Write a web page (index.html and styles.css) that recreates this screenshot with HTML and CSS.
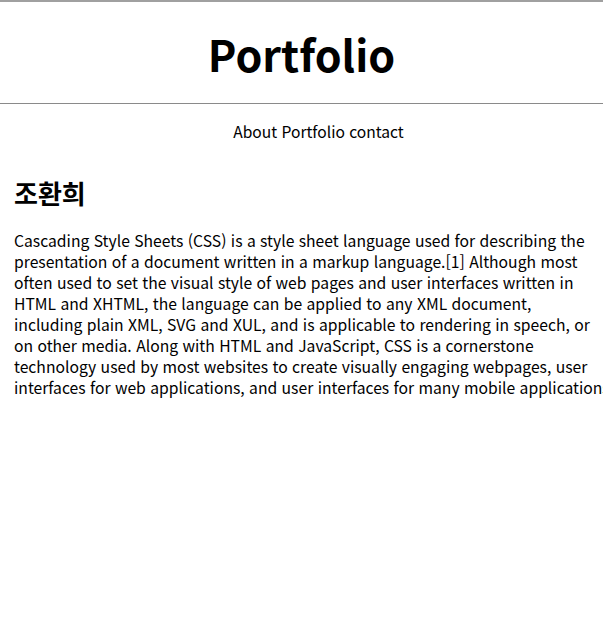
FILE: index.html
```html
<!DOCTYPE html>
<html lang="ko">
<head>
<meta charset="utf-8">
<title>Portfolio</title>
<link rel="stylesheet" href="styles.css">
</head>
<body>
<header class="site-header">
  <h1 class="site-title">Portfolio</h1>
</header>
<nav class="site-nav">About Portfolio contact</nav>
<section class="intro">
  <h2 class="intro-name">조환희</h2>
  <p class="intro-text">Cascading Style Sheets (CSS) is a style sheet language used for describing the<br>presentation of a document written in a markup language.[1] Although most<br>often used to set the visual style of web pages and user interfaces written in<br>HTML and XHTML, the language can be applied to any XML document,<br>including plain XML, SVG and XUL, and is applicable to rendering in speech, or<br>on other media. Along with HTML and JavaScript, CSS is a cornerstone<br>technology used by most websites to create visually engaging webpages, user<br>interfaces for web applications, and user interfaces for many mobile applications.</p>
</section>
</body>
</html>
```
FILE: styles.css
```css
html, body {
  margin: 0;
  padding: 0;
  background: #fff;
  overflow: hidden;
}
body {
  font-family: "Noto Sans CJK KR", "Noto Sans", sans-serif;
  color: #000;
  font-size: 15.7px;
}
.site-header {
  border-top: 2px solid #a0a0a0;
  border-bottom: 1px solid #8a8a8a;
  height: 101px;
  display: flex;
  align-items: center;
  justify-content: center;
}
.site-title {
  margin: 0;
  font-size: 43px;
  font-weight: 700;
  line-height: 1;
  padding-top: 2px;
}
.site-nav {
  text-align: center;
  margin-top: 16px;
  padding-left: 34px;
  line-height: 22px;
  font-size: 15.6px;
}
.intro {
  padding: 0 14px;
}
.intro-name {
  margin: 34px 0 0;
  font-size: 26px;
  font-weight: 700;
  line-height: 34px;
}
.intro-text {
  margin: 20px 0 0;
  line-height: 21px;
  white-space: nowrap;
}
```
